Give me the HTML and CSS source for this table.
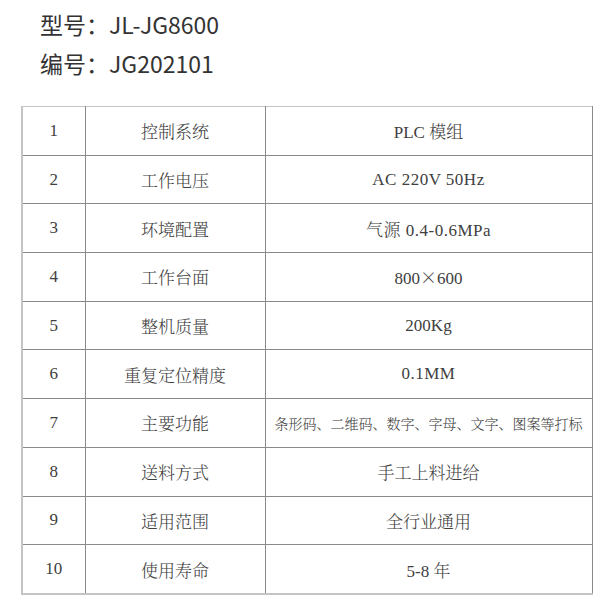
FILE: index.html
```html
<!DOCTYPE html>
<html lang="zh-CN">
<head>
<meta charset="utf-8">
<title>参数</title>
<link rel="stylesheet" href="styles.css">
</head>
<body>
<div class="page">
  <div class="info">
    <p class="info-line">型号：JL-JG8600</p>
    <p class="info-line">编号：JG202101</p>
  </div>
  <table class="spec">
    <colgroup>
      <col class="c-no"><col class="c-name"><col class="c-val">
    </colgroup>
    <tbody>
      <tr><td>1</td><td>控制系统</td><td>PLC 模组</td></tr>
      <tr><td>2</td><td>工作电压</td><td class="wide">AC 220V 50Hz</td></tr>
      <tr><td>3</td><td>环境配置</td><td class="wide">气源 0.4-0.6MPa</td></tr>
      <tr><td>4</td><td>工作台面</td><td>800<span class="cjk">×</span>600</td></tr>
      <tr><td>5</td><td>整机质量</td><td>200Kg</td></tr>
      <tr><td>6</td><td>重复定位精度</td><td class="wide">0.1MM</td></tr>
      <tr><td>7</td><td>主要功能</td><td class="small">条形码、二维码、数字、字母、文字、图案等打标</td></tr>
      <tr><td>8</td><td>送料方式</td><td>手工上料进给</td></tr>
      <tr><td>9</td><td>适用范围</td><td>全行业通用</td></tr>
      <tr><td>10</td><td>使用寿命</td><td>5-8 年</td></tr>
    </tbody>
  </table>
</div>
</body>
</html>
```
FILE: styles.css
```css
html, body {
  margin: 0;
  padding: 0;
  background: #ffffff;
}
.page {
  padding: 5px 17px 0 21px;
}
.info {
  padding-left: 19px;
}
.info-line {
  margin: 0;
  font-family: "Noto Sans CJK SC", "Noto Sans", sans-serif;
  font-size: 23px;
  line-height: 39px;
  color: #333333;
}
.spec {
  margin-top: 23px;
  width: 571px;
  border-collapse: collapse;
  table-layout: fixed;
  border-top: 1px solid #c4c4c4;
  border-left: 2px solid #c4c4c4;
  border-bottom: 2px solid #c4c4c4;
  border-right: 1px solid #8a8a8a;
  font-family: "Liberation Serif", "Noto Serif CJK SC", "Noto Sans CJK SC", serif;
  font-size: 17px;
  font-weight: 300;
  color: #404040;
}
.c-no { width: 63px; }
.c-name { width: 180px; }
.c-val { width: 327px; }
.spec td {
  height: 47.7px;
  padding: 0;
  text-align: center;
  vertical-align: middle;
  border: 1px solid #8a8a8a;
}
.spec tr:first-child td { border-top-color: #c4c4c4; }
.spec td:first-child { border-left: 2px solid #c4c4c4; }
.spec tr:last-child td { border-bottom: 2px solid #c4c4c4; }
.spec td.wide {
  letter-spacing: 0.5px;
}
.spec td.small {
  font-size: 14px;
  white-space: nowrap;
}
.cjk {
  font-family: "Noto Sans CJK SC", sans-serif;
}
```
